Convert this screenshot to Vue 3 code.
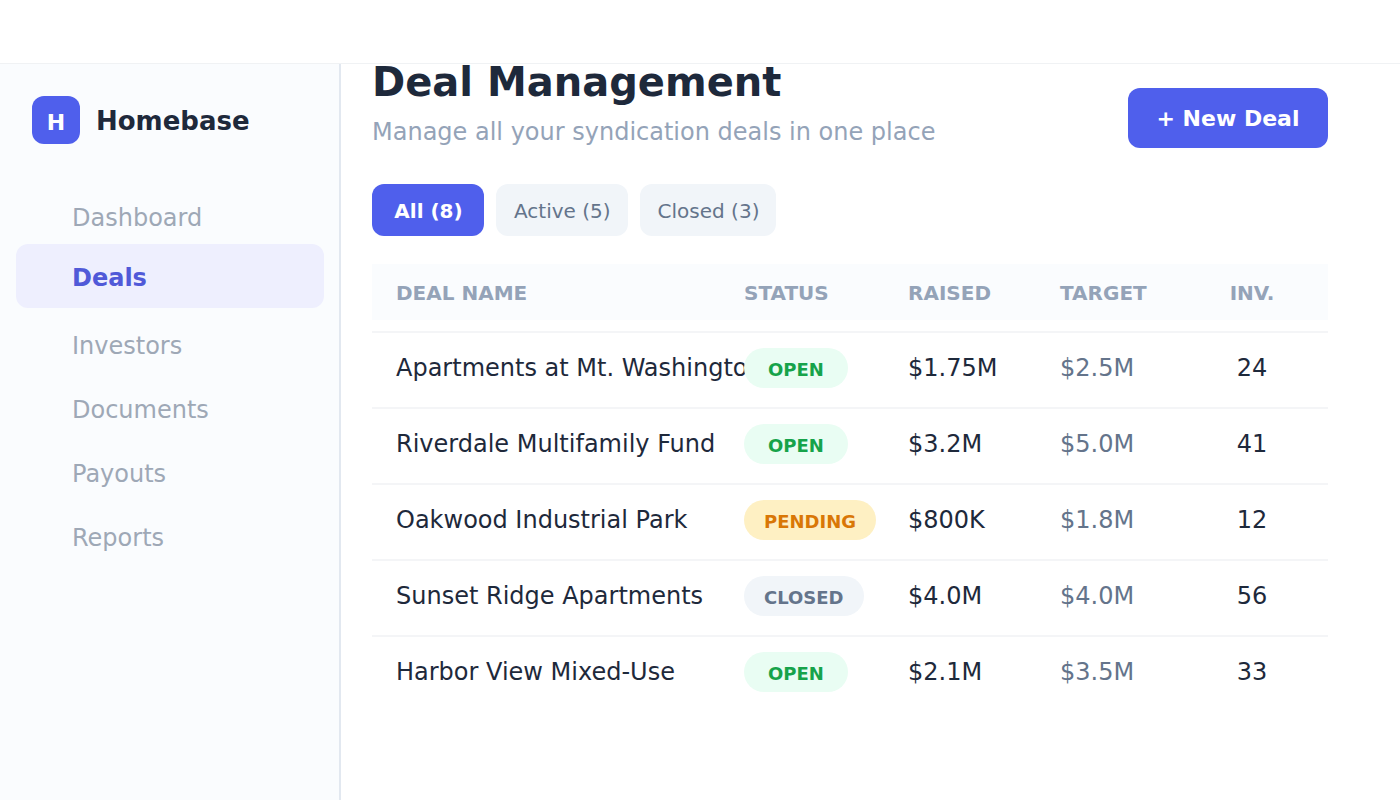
<script setup>
import { ref } from 'vue'

const activePage = ref('Deals')
const activeTab = ref('All')

const pages = ['Dashboard', 'Deals', 'Investors', 'Documents', 'Payouts', 'Reports']

const tabs = [
  { name: 'All', count: 8 },
  { name: 'Active', count: 5 },
  { name: 'Closed', count: 3 }
]

const deals = [
  { name: 'Apartments at Mt. Washington', status: 'open', raised: '$1.75M', target: '$2.5M', investors: 24 },
  { name: 'Riverdale Multifamily Fund', status: 'open', raised: '$3.2M', target: '$5.0M', investors: 41 },
  { name: 'Oakwood Industrial Park', status: 'pending', raised: '$800K', target: '$1.8M', investors: 12 },
  { name: 'Sunset Ridge Apartments', status: 'closed', raised: '$4.0M', target: '$4.0M', investors: 56 },
  { name: 'Harbor View Mixed-Use', status: 'open', raised: '$2.1M', target: '$3.5M', investors: 33 }
]
</script>

<template>
  <div class="app">
    <header class="topbar"></header>

    <div class="layout">
      <aside class="sidebar">
        <div class="brand">
          <div class="logo">H</div>
          <div class="brand-name">Homebase</div>
        </div>
        <nav class="nav">
          <a
            v-for="page in pages"
            :key="page"
            href="#"
            class="nav-item"
            :class="{ active: page === activePage }"
            @click.prevent="activePage = page"
          >{{ page }}</a>
        </nav>
      </aside>

      <main class="content">
        <div class="page-head">
          <div>
            <h1>Deal Management</h1>
            <p>Manage all your syndication deals in one place</p>
          </div>
          <button class="new-deal">+ New Deal</button>
        </div>

        <div class="tabs">
          <button
            v-for="tab in tabs"
            :key="tab.name"
            class="tab"
            :class="{ active: tab.name === activeTab }"
            @click="activeTab = tab.name"
          >{{ tab.name }} ({{ tab.count }})</button>
        </div>

        <table>
          <thead>
            <tr>
              <th class="name">DEAL NAME</th>
              <th class="status">STATUS</th>
              <th class="raised">RAISED</th>
              <th class="target">TARGET</th>
              <th class="investors">INV.</th>
            </tr>
          </thead>
          <tbody>
            <tr v-for="deal in deals" :key="deal.name">
              <td class="name">{{ deal.name }}</td>
              <td class="status"><span class="badge" :class="deal.status">{{ deal.status.toUpperCase() }}</span></td>
              <td class="raised">{{ deal.raised }}</td>
              <td class="target">{{ deal.target }}</td>
              <td class="investors">{{ deal.investors }}</td>
            </tr>
          </tbody>
        </table>
      </main>
    </div>
  </div>
</template>

<style>
body {
  margin: 0;
  background: #fff;
}
</style>

<style scoped>
.app {
  display: flex;
  flex-direction: column;
  min-height: 100vh;
  font-family: 'DejaVu Sans', sans-serif;
  font-size: 24px;
  color: #1e293b;
}

.topbar {
  height: 63px;
  border-bottom: 1px solid #f0f2f4;
}

.layout {
  display: flex;
  flex: 1;
}

.sidebar {
  box-sizing: border-box;
  width: 341px;
  flex-shrink: 0;
  padding: 32px 15px 32px 16px;
  background: #fafcfe;
  border-right: 2px solid #e2e8f0;
}

.brand {
  display: flex;
  align-items: center;
  gap: 16px;
  padding-left: 16px;
  margin-bottom: 44px;
}

.logo {
  width: 48px;
  height: 48px;
  border-radius: 12px;
  background: #4f5fec;
  color: #fff;
  font-size: 22px;
  font-weight: bold;
  line-height: 54px;
  text-align: center;
}

.brand-name {
  padding-top: 2px;
  font-size: 26px;
  font-weight: bold;
}

.nav-item {
  display: block;
  line-height: 52px;
  margin-bottom: 8px;
  padding: 4px 0 0 56px;
  border-radius: 12px;
  color: #9ea8b6;
  text-decoration: none;
}

.nav-item.active {
  line-height: 60px;
  margin-top: -8px;
  background: #eeeffe;
  color: #5059d8;
  font-weight: bold;
}

.content {
  flex: 1;
  min-width: 0;
  padding: 0 72px 32px 31px;
}

.page-head {
  display: flex;
  align-items: flex-end;
  justify-content: space-between;
  margin-bottom: 36px;
}

h1 {
  margin: 0 0 16px;
  font-size: 40px;
  line-height: 36px;
}

p {
  margin: 0;
  line-height: 32px;
  color: #94a3b8;
}

button {
  border: none;
  border-radius: 12px;
  font-family: inherit;
  cursor: pointer;
}

.new-deal {
  width: 200px;
  height: 60px;
  background: #4f5fec;
  color: #fff;
  font-size: 22px;
  font-weight: bold;
}

.tabs {
  display: flex;
  gap: 12px;
  margin-bottom: 28px;
}

.tab {
  min-width: 112px;
  height: 52px;
  padding: 2px 17px 0 18px;
  background: #f1f5f9;
  color: #64748b;
  font-size: 20px;
}

.tab.active {
  background: #4f5fec;
  color: #fff;
  font-weight: bold;
}

table {
  width: 100%;
  table-layout: fixed;
  border-spacing: 0;
}

th,
td {
  padding: 0;
  text-align: left;
  white-space: nowrap;
}

th {
  box-sizing: border-box;
  height: 56px;
  padding-top: 2px;
  background: #fafcfe;
  color: #94a3b8;
  font-size: 20px;
}

/* space between the header band and the first row */
tbody::before {
  content: '';
  display: block;
  height: 11px;
}

td {
  box-sizing: border-box;
  height: 76px;
  padding-bottom: 4px;
  border-top: 2px solid #f4f5f7;
}

.name {
  padding-left: 24px;
}

.status {
  width: 164px;
}

.raised {
  width: 152px;
}

.target {
  width: 116px;
}

td.target {
  color: #64748b;
}

.investors {
  width: 152px;
  text-align: center;
}

.badge {
  display: inline-block;
  box-sizing: border-box;
  min-width: 104px;
  padding: 4px 20px 0;
  border-radius: 20px;
  font-size: 18px;
  font-weight: bold;
  line-height: 36px;
  text-align: center;
  vertical-align: middle;
}

.open {
  background: #e9fdf3;
  color: #16a34a;
}

.pending {
  background: #fef0c3;
  color: #d97706;
}

.closed {
  background: #f1f5f9;
  color: #64748b;
}
</style>
